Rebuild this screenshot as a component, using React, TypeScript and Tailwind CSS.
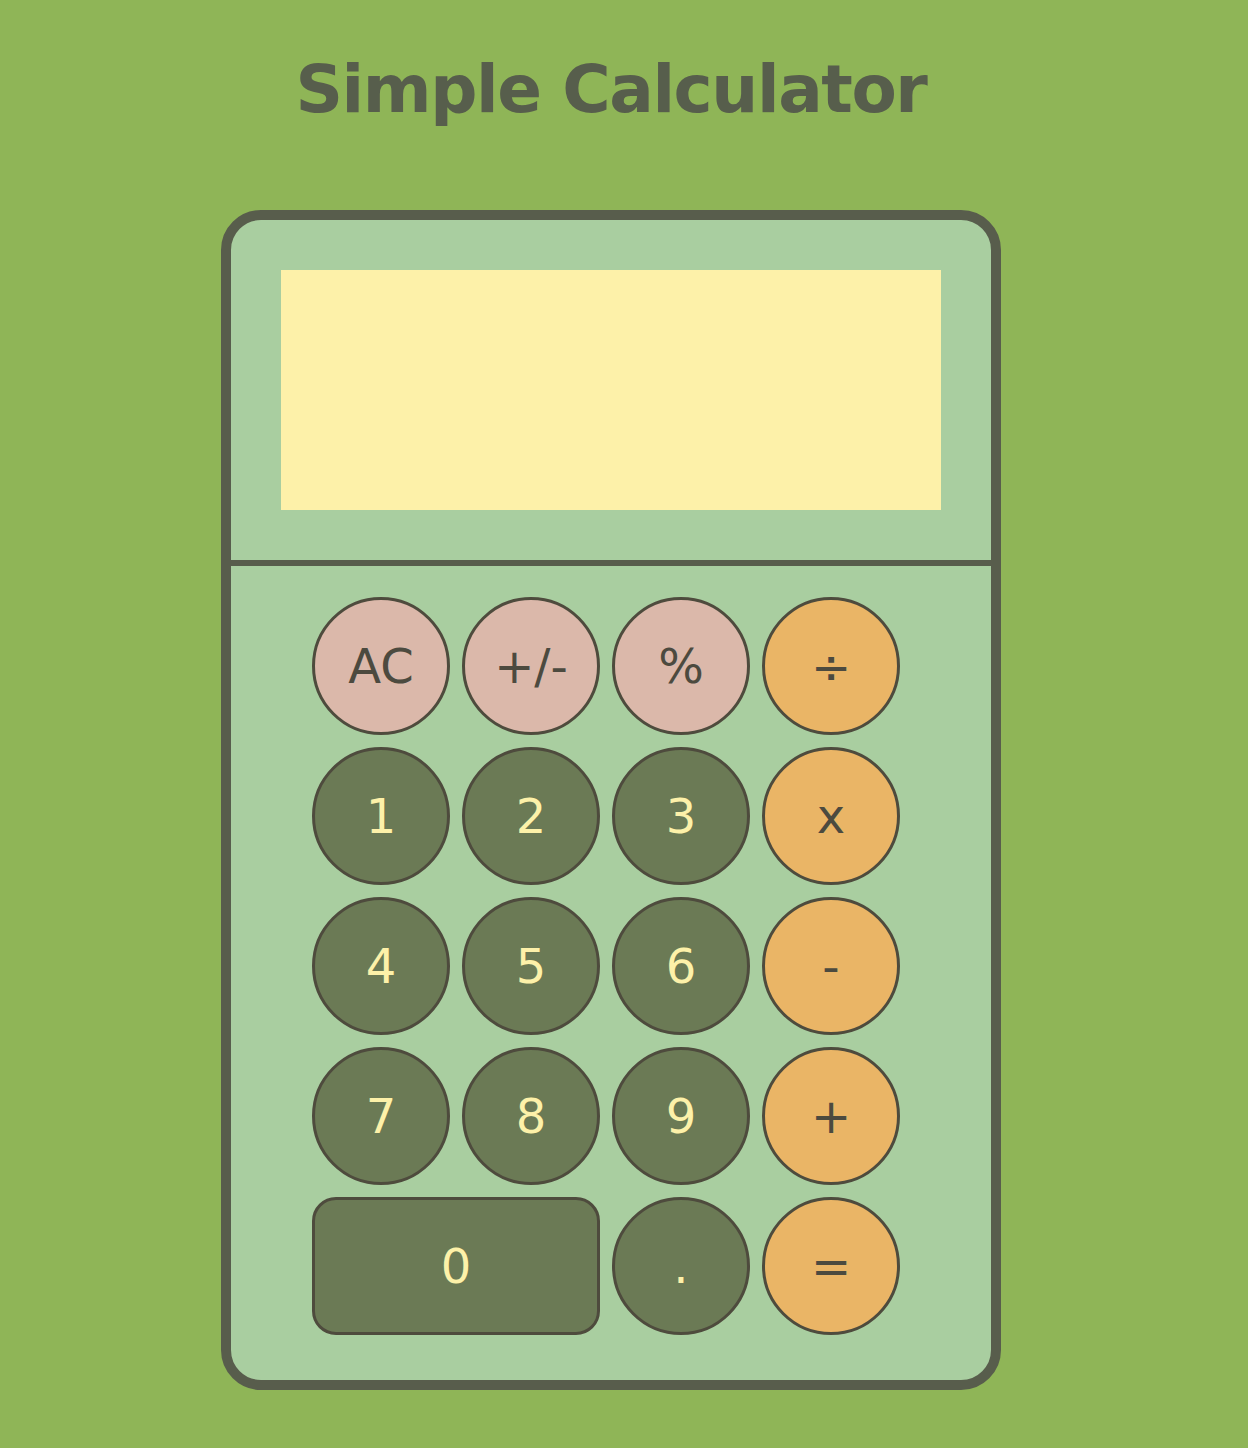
import React from "react";

const font = { fontFamily: '"DejaVu Sans", Verdana, sans-serif' };

function Btn({ label, kind, wide }: { label: string; kind: "fn" | "op" | "num"; wide?: boolean }) {
  const color =
    kind === "fn"
      ? "bg-[#dbb8aa] text-[#4c4a3f]"
      : kind === "op"
      ? "bg-[#eab566] text-[#4c4a3f]"
      : "bg-[#6b7a55] text-[#fdf1a9]";
  const shape = wide ? "w-[288px] rounded-[24px]" : "w-[138px] rounded-full";
  return (
    <div
      className={`${shape} ${color} h-[138px] border-[3px] border-[#4e4b3d] flex items-center justify-center text-[48px] leading-none`}
    >
      {label}
    </div>
  );
}

export default function App() {
  const rows: { label: string; kind: "fn" | "op" | "num"; wide?: boolean }[][] = [
    [
      { label: "AC", kind: "fn" },
      { label: "+/-", kind: "fn" },
      { label: "%", kind: "fn" },
      { label: "÷", kind: "op" },
    ],
    [
      { label: "1", kind: "num" },
      { label: "2", kind: "num" },
      { label: "3", kind: "num" },
      { label: "x", kind: "op" },
    ],
    [
      { label: "4", kind: "num" },
      { label: "5", kind: "num" },
      { label: "6", kind: "num" },
      { label: "-", kind: "op" },
    ],
    [
      { label: "7", kind: "num" },
      { label: "8", kind: "num" },
      { label: "9", kind: "num" },
      { label: "+", kind: "op" },
    ],
    [
      { label: "0", kind: "num", wide: true },
      { label: ".", kind: "num" },
      { label: "=", kind: "op" },
    ],
  ];
  return (
    <div className="min-h-[1448px] w-full bg-[#8fb557]" style={font}>
      <div className="w-[1222px] flex flex-col items-center">
        <h1 className="mt-[52px] text-[66px] font-bold text-[#575e4c] leading-[1.164] tracking-[-1.4px]">Simple Calculator</h1>
        <div className="mt-[81px] w-[780px] h-[1180px] border-[10px] border-[#585d4c] rounded-[40px] bg-[#a9cea0] flex flex-col overflow-hidden">
          <div className="p-[50px] border-b-[6px] border-[#585d4c]">
            <div className="w-[660px] h-[240px] bg-[#fdf1a9]"></div>
          </div>
          <div className="pl-[81px] pt-[31px] flex flex-col gap-[12px]">
            {rows.map((r, i) => (
              <div key={i} className="flex gap-[12px]">
                {r.map((b) => (
                  <Btn key={b.label} label={b.label} kind={b.kind} wide={b.wide} />
                ))}
              </div>
            ))}
          </div>
        </div>
      </div>
    </div>
  );
}
